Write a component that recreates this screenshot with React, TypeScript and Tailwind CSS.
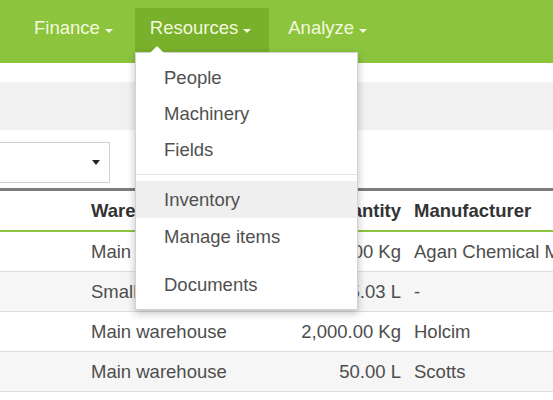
import React from 'react';

const navItems = [
  { label: 'Finance', active: false },
  { label: 'Resources', active: true },
  { label: 'Analyze', active: false },
];

const rows = [
  { warehouse: 'Main warehouse', qty: '1,000.00 Kg', maker: 'Agan Chemical Manufacturers' },
  { warehouse: 'Small warehouse', qty: '25.03 L', maker: '-' },
  { warehouse: 'Main warehouse', qty: '2,000.00 Kg', maker: 'Holcim' },
  { warehouse: 'Main warehouse', qty: '50.00 L', maker: 'Scotts' },
];

function Caret({ className }: { className: string }) {
  return (
    <span
      className={`inline-block w-0 h-0 border-l-[4px] border-r-[4px] border-t-[4px] border-l-transparent border-r-transparent ${className}`}
    />
  );
}

export default function App() {
  return (
    <div
      className="relative w-[553px] h-[400px] overflow-hidden bg-white text-[18.5px]"
      style={{ fontFamily: '"Liberation Sans", Arial, sans-serif' }}
    >
      {/* Navbar */}
      <nav className="h-[63px] bg-[#8cc43e] flex items-start gap-[4px] pl-[19px]">
        {navItems.map((n) => (
          <div
            key={n.label}
            className={`h-[44px] mt-[8px] flex items-center pl-[15px] pr-[18px] text-[#f3f9dd] ${
              n.active ? 'bg-[#79b02c]' : ''
            }`}
          >
            <span className="leading-none -mt-[3px]">{n.label}</span>
            <Caret className="ml-[5px] border-t-[#f3f9dd] mt-[1px]" />
          </div>
        ))}
      </nav>

      {/* Sub bar */}
      <div className="h-[19px] bg-white" />
      <div className="h-[48px] bg-[#f1f1f1]" />

      {/* Filter */}
      <div className="h-[58px] pt-[12px]">
        <div className="w-[111px] h-[41px] -ml-[1px] border border-[#cfcfcf] bg-white flex items-center justify-end pr-[9px]">
          <Caret className="border-t-[#222] border-t-[5px] border-l-[4px] border-r-[4px]" />
        </div>
      </div>

      {/* Table */}
      <div className="border-t-[3px] border-[#7c7c7c]">
        <div className="h-[41px] flex items-center font-bold text-[#333] border-b-[2px] border-[#8cc43e] whitespace-nowrap">
          <div className="w-[81px] shrink-0" />
          <div className="w-[211px] shrink-0 pl-[10px]">Warehouse</div>
          <div className="w-[119px] shrink-0 text-right pr-[10px]">Quantity</div>
          <div className="pl-[3px]">Manufacturer</div>
        </div>
        {rows.map((r, i) => (
          <div
            key={i}
            className={`h-[40px] flex items-center text-[#4d4d4d] border-b border-[#dedede] whitespace-nowrap ${
              i % 2 === 1 ? 'bg-[#f6f6f6]' : 'bg-white'
            }`}
          >
            <div className="w-[81px] shrink-0" />
            <div className="w-[211px] shrink-0 pl-[10px]">{r.warehouse}</div>
            <div className="w-[119px] shrink-0 text-right pr-[10px]">{r.qty}</div>
            <div className="pl-[3px]">{r.maker}</div>
          </div>
        ))}
      </div>

      {/* Dropdown menu */}
      <div className="absolute left-[135px] top-[52px] w-[223px] bg-white border border-[#d2d2d2] shadow-[0_3px_8px_rgba(0,0,0,0.25)] pt-[7px] pb-[6px] text-[#505050]">
        <div className="absolute -top-[7px] left-[14px] w-0 h-0 border-l-[7px] border-r-[7px] border-b-[7px] border-l-transparent border-r-transparent border-b-white" />
        <div className="h-[36px] flex items-center pl-[28px]">People</div>
        <div className="h-[36px] flex items-center pl-[28px]">Machinery</div>
        <div className="h-[36px] flex items-center pl-[28px]">Fields</div>
        <div className="h-[1px] bg-[#e4e4e4] my-[6px]" />
        <div className="h-[37px] flex items-center pl-[28px] bg-[#efefef]">Inventory</div>
        <div className="h-[37px] flex items-center pl-[28px]">Manage items</div>
        <div className="h-[12px]" />
        <div className="h-[36px] flex items-center pl-[28px]">Documents</div>
      </div>
    </div>
  );
}
